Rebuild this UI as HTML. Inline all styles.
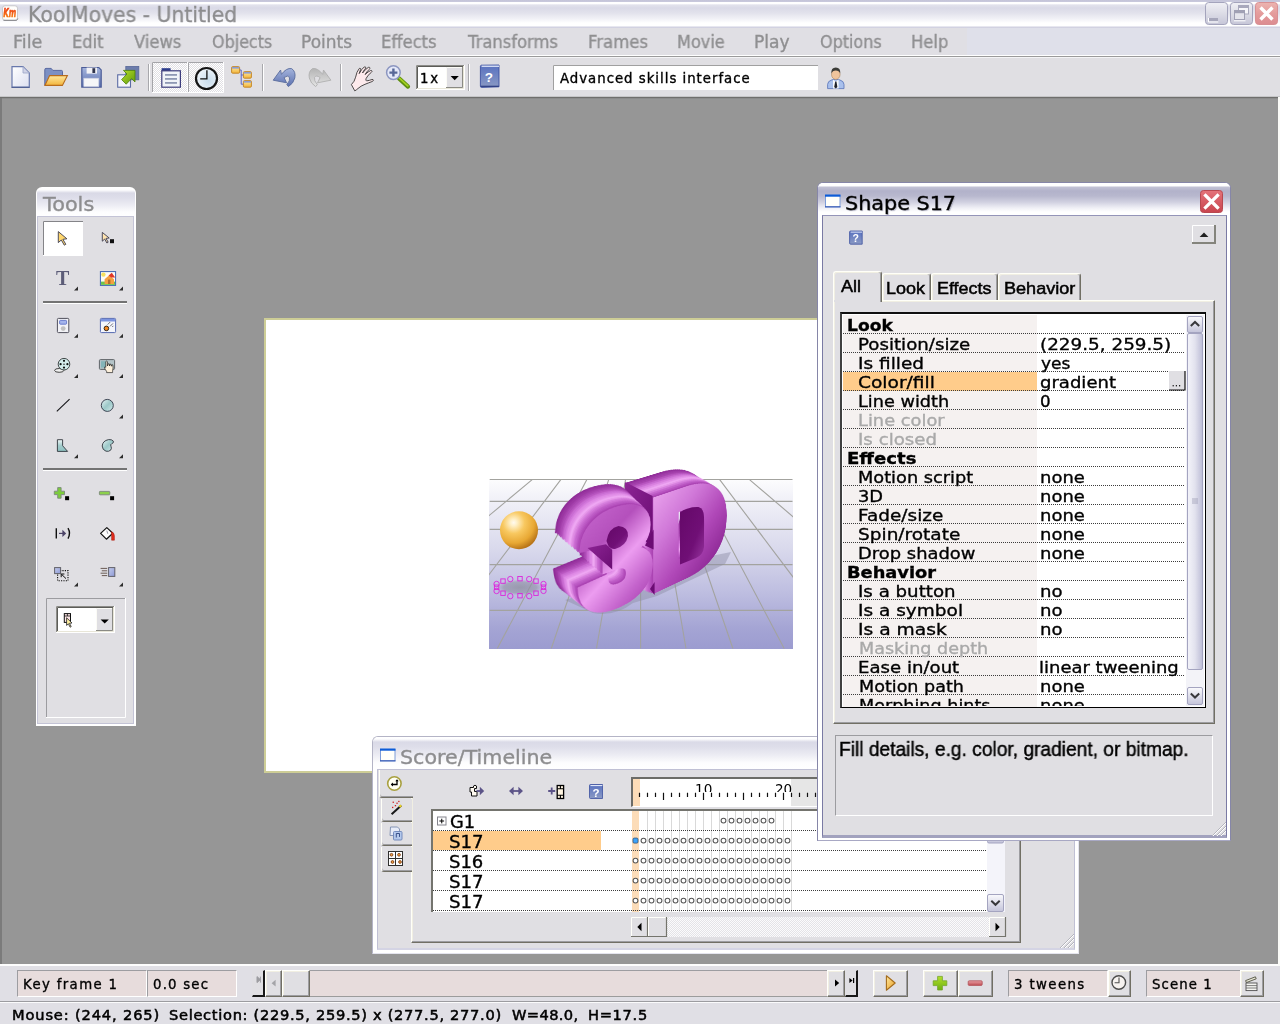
<!DOCTYPE html>
<html lang="en">
<head>
<meta charset="utf-8">
<title>KoolMoves - Untitled</title>
<style>
*{box-sizing:border-box;margin:0;padding:0}
html,body{width:1280px;height:1024px;overflow:hidden}
body{background:#969696;font-family:"DejaVu Sans","Liberation Sans",sans-serif;color:#000;position:relative}
.a{position:absolute}
.t{position:absolute;white-space:pre;transform-origin:0 0;will-change:transform;-webkit-text-stroke:.35px}
svg{position:absolute;overflow:visible}
/* main window chrome */
#titlebar{left:0;top:0;width:1280px;height:28px;background:linear-gradient(#c4c4d8 0,#c8c8dc 1.5px,#ffffff 2px,#ffffff 3.5px,#e2e2ec 5px,#dadae7 8px,#e2e2ec 13px,#f2f2f7 19px,#ffffff 23px,#ffffff 26px,#cfcfe0 27px,#d4d4e2 28px)}
#menubar{left:0;top:28px;width:1280px;height:27px;background:#dfe0ea}
#menubar .mb{left:0;top:0;width:967px;height:27px;background:#e0dfe4}
#menusep{left:0;top:55px;width:1280px;height:3px;background:linear-gradient(#ffffff 0,#ffffff 1px,#9a9a9a 1px,#9a9a9a 2px,#f4f4f6 2px)}
#toolbar{left:0;top:58px;width:1280px;height:39px;background:#e0dfe3}
#tbshadow{left:0;top:96px;width:1280px;height:3px;background:linear-gradient(#c6c6c8 0,#c6c6c8 1px,#6f6f6d 1px,#6f6f6d 2px,#8c8c8c 2px,#8c8c8c 3px)}
.menu{color:#8f8f91}
.panel{background:#e0dfe3}
</style>
</head>
<body>
<!-- main window chrome -->
<div class="a" id="titlebar"></div>
<div class="t" style="left:28.49px;top:2.8px;font-size:20.5px;line-height:24px;transform:scaleX(0.9944);color:#8d8d8f">KoolMoves - Untitled</div>
<div class="a" id="menubar"><div class="a mb"></div></div>
<div class="t menu" style="left:12.75px;top:31.8px;font-size:17px;line-height:20px;transform:scaleX(1.0344)">File</div>
<div class="t menu" style="left:71.87px;top:31.8px;font-size:17px;line-height:20px;transform:scaleX(0.9569)">Edit</div>
<div class="t menu" style="left:133.5px;top:31.8px;font-size:17px;line-height:20px;transform:scaleX(0.9624)">Views</div>
<div class="t menu" style="left:211.55px;top:31.8px;font-size:17px;line-height:20px;transform:scaleX(0.9386)">Objects</div>
<div class="t menu" style="left:301.12px;top:31.8px;font-size:17px;line-height:20px;transform:scaleX(0.9939)">Points</div>
<div class="t menu" style="left:381.37px;top:31.8px;font-size:17px;line-height:20px;transform:scaleX(0.9601)">Effects</div>
<div class="t menu" style="left:467.66px;top:31.8px;font-size:17px;line-height:20px;transform:scaleX(0.9628)">Transforms</div>
<div class="t menu" style="left:587.6px;top:31.8px;font-size:17px;line-height:20px;transform:scaleX(0.9705)">Frames</div>
<div class="t menu" style="left:677.14px;top:31.8px;font-size:17px;line-height:20px;transform:scaleX(0.9483)">Movie</div>
<div class="t menu" style="left:754.29px;top:31.8px;font-size:17px;line-height:20px;transform:scaleX(1.0072)">Play</div>
<div class="t menu" style="left:820.15px;top:31.8px;font-size:17px;line-height:20px;transform:scaleX(0.9404)">Options</div>
<div class="t menu" style="left:911.37px;top:31.8px;font-size:17px;line-height:20px;transform:scaleX(0.9626)">Help</div>
<div class="a" id="menusep"></div>
<div class="a" id="toolbar"></div>
<div class="a" id="tbshadow"></div>
<div class="a" style="left:0;top:98px;width:2px;height:868px;background:#7b7b7b"></div>
<svg class="a" style="left:0;top:0" width="1280" height="28" viewBox="0 0 1280 28">
<defs>
<linearGradient id="gWb" x1="0" y1="0" x2="0" y2="1"><stop offset="0" stop-color="#f0f0f5"/><stop offset=".5" stop-color="#dcdce6"/><stop offset="1" stop-color="#c6c6d8"/></linearGradient>
<linearGradient id="gWc" x1="0" y1="0" x2="0" y2="1"><stop offset="0" stop-color="#ecb4b0"/><stop offset=".5" stop-color="#e49c9c"/><stop offset="1" stop-color="#dc8c90"/></linearGradient>
<linearGradient id="gKm" x1="0" y1="0" x2="0" y2="1"><stop offset="0" stop-color="#e83018"/><stop offset="1" stop-color="#fc8c10"/></linearGradient>
</defs>
<rect x="2.5" y="5.8" width="15" height="14.600" rx="2.500" fill="#fffefc" stroke="#b8b8bc" stroke-width=".7"/>
<path d="M3.500 20.300h13q1-.5 1.300-1.800" fill="none" stroke="#6c6c70" stroke-width=".8"/>
<text x="3.200" y="17" font-family="DejaVu Sans,sans-serif" font-weight="bold" font-style="italic" font-size="11.500" fill="url(#gKm)" stroke="url(#gKm)" stroke-width=".5" textLength="13" lengthAdjust="spacingAndGlyphs">Km</text>
<rect x="1205.500" y="2.500" width="22" height="22" rx="3.200" fill="url(#gWb)" stroke="#a4a4bc" stroke-width="1"/>
<rect x="1230.500" y="2.500" width="22" height="22" rx="3.200" fill="url(#gWb)" stroke="#a4a4bc" stroke-width="1"/>
<rect x="1255.500" y="2.500" width="22" height="22" rx="3.200" fill="url(#gWc)" stroke="#d89094" stroke-width="1"/>
<path d="M1208.500 18v4h9.800" fill="none" stroke="#ffffff" stroke-width="1"/>
<rect x="1209" y="18" width="9" height="3" fill="#a6a6ba"/>
<rect x="1238.500" y="5.500" width="10" height="8.500" fill="#f6f6fa" stroke="#a8a8bc" stroke-width="1"/>
<rect x="1238" y="5" width="11" height="3" fill="#a8a8bc"/>
<rect x="1234.500" y="10.500" width="10" height="9" fill="#e4e4ec" stroke="#a0a0b4" stroke-width="1"/>
<rect x="1234" y="10" width="11" height="3.200" fill="#a0a0b4"/>
<path d="M1234 20.800h11.500" stroke="#ffffff" stroke-width="1"/>
<path d="M1260.500 7.500l12 12M1272.500 7.500l-12 12" stroke="#ffffff" stroke-width="3.400"/>
</svg>
<!-- toolbar -->
<svg class="a" style="left:0;top:58px" width="1280" height="40" viewBox="0 58 1280 40">
<defs>
<linearGradient id="gPage" x1="0" y1="0" x2="1" y2="1"><stop offset="0" stop-color="#ffffff"/><stop offset="1" stop-color="#dcdff0"/></linearGradient>
<linearGradient id="gFold" x1="0" y1="0" x2="0" y2="1"><stop offset="0" stop-color="#ffe9a0"/><stop offset="1" stop-color="#f2b43a"/></linearGradient>
<linearGradient id="gBlue" x1="0" y1="0" x2="0" y2="1"><stop offset="0" stop-color="#a4b4dc"/><stop offset="1" stop-color="#5c70b0"/></linearGradient>
<linearGradient id="gGreen" x1="0" y1="0" x2="1" y2="1"><stop offset="0" stop-color="#b6dc2a"/><stop offset="1" stop-color="#5e9a0c"/></linearGradient>
<linearGradient id="gGray" x1="0" y1="0" x2="0" y2="1"><stop offset="0" stop-color="#b4b4b4"/><stop offset="1" stop-color="#e4e4e4"/></linearGradient>
<linearGradient id="gBook" x1="0" y1="0" x2="0" y2="1"><stop offset="0" stop-color="#5871c0"/><stop offset="1" stop-color="#8b9ac4"/></linearGradient>
<radialGradient id="gClock" cx=".6" cy=".6" r=".7"><stop offset="0" stop-color="#c8dcec"/><stop offset="1" stop-color="#f4f8fc"/></radialGradient>
<pattern id="dith" width="2" height="2" patternUnits="userSpaceOnUse"><rect width="2" height="2" fill="#e0dfe3"/><rect width="1" height="1" fill="#fff"/><rect x="1" y="1" width="1" height="1" fill="#fff"/></pattern>
</defs>
<!-- new -->
<path d="M12 66.700h11l6.300 6.300v14.200H12z" fill="url(#gPage)" stroke="#6878ac" stroke-width="1.200"/><path d="M11.600 87.400h18" stroke="#4c5c90" stroke-width="1"/>
<path d="M23 66.7v6.3h6.3z" fill="#d0d3e6" stroke="#9aa4c8" stroke-width=".8"/>
<!-- open -->
<path d="M44.8 85.2V69.6q0-1.2 1.2-1.2h5.2l1.6 2h8.6q1.1 0 1.1 1.1v4" fill="#7c90c4" stroke="#5868a0" stroke-width="1"/>
<path d="M49.6 75.6h17.8l-5 9.8H44.9z" fill="url(#gFold)" stroke="#b86c1c" stroke-width="1.100"/>
<!-- save -->
<path d="M81.8 67.5h17l2.4 2.4v17.2H81.8z" fill="url(#gBlue)" stroke="#4c5c98" stroke-width="1.200"/>
<rect x="86.6" y="67.6" width="10.4" height="6" fill="#f2f2f6"/>
<rect x="92.4" y="68.2" width="2.8" height="4.8" fill="#30344c"/>
<rect x="83.8" y="78.2" width="15" height="8.4" fill="#f6f6f8" stroke="#c8cce0" stroke-width=".6"/>
<!-- export -->
<rect x="125.8" y="66.4" width="13" height="13.4" fill="#6c7cac" stroke="#586898" stroke-width=".8"/>
<rect x="117.7" y="74.8" width="12.8" height="12.4" fill="#f4f5fa" stroke="#5c6ca4" stroke-width="1.1"/>
<path d="M123.4 70.4h11.6v11.6l-3.4-3.4-5.4 5.6-4.6-4.6 5.4-5.6z" fill="url(#gGreen)" stroke="#4c8208" stroke-width=".8"/>
<!-- separators -->
<g fill="#a8a8ac"><rect x="148" y="64" width="1" height="27"/><rect x="262" y="64" width="1" height="27"/><rect x="340" y="64" width="1" height="27"/><rect x="468" y="64" width="1" height="27"/></g>
<g fill="#ffffff"><rect x="149" y="64" width="1" height="27"/><rect x="263" y="64" width="1" height="27"/><rect x="341" y="64" width="1" height="27"/><rect x="469" y="64" width="1" height="27"/></g>
<!-- pressed buttons -->
<rect x="152" y="62" width="35" height="30" fill="url(#dith)"/>
<path d="M152.5 92V62.5H187" fill="none" stroke="#a4a4a8" stroke-width="1"/>
<path d="M152 92.5h35.5V62" fill="none" stroke="#ffffff" stroke-width="1"/>
<rect x="188" y="62" width="35" height="30" fill="url(#dith)"/>
<path d="M188.500 92V62.500H223" fill="none" stroke="#a4a4a8" stroke-width="1"/>
<path d="M188 92.500h35.500V62" fill="none" stroke="#ffffff" stroke-width="1"/>
<!-- properties icon -->
<rect x="161.600" y="68.200" width="9" height="3" fill="#2c3c8c"/>
<rect x="161.800" y="70.800" width="18.600" height="16.400" fill="#f0f3f8" stroke="#3c3c7c" stroke-width="1.2"/>
<g fill="#8e98b4"><rect x="165" y="74" width="12" height="1.800"/><rect x="165" y="78" width="12" height="1.800"/><rect x="165" y="82" width="12" height="1.800"/></g>
<!-- clock -->
<circle cx="206.500" cy="78.500" r="10.500" fill="url(#gClock)" stroke="#141414" stroke-width="2.200"/>
<path d="M206.900 70.200v8.600h-6.700" fill="none" stroke="#101010" stroke-width="1.300"/>
<!-- tree -->
<path d="M240 70h1.200v14.200h2.400M241.200 75h2.400" fill="none" stroke="#5a64c4" stroke-width="1"/>
<g fill="url(#gFold)" stroke="#c08020" stroke-width=".9"><rect x="231.600" y="66.600" width="8" height="6.600" rx="1"/><rect x="243.400" y="71.600" width="8" height="6.600" rx="1"/><rect x="243.400" y="80.600" width="8" height="6.600" rx="1"/></g>
<g fill="#8c9cd0"><rect x="232" y="67" width="7.200" height="1.600"/><rect x="243.800" y="72" width="7.200" height="1.600"/><rect x="243.800" y="81" width="7.200" height="1.600"/></g>
<!-- undo -->
<path d="M273.2 80.2L280.6 70L281.4 74.4Q286.5 67.6 291.6 68.6Q296 71.4 294.8 78Q293.4 83.6 288.4 86.6L286.8 84.6Q290.4 80.6 289.6 77.4Q287.8 74.6 284 77.6L286.6 82.8Z" fill="url(#gBlue)" stroke="#5a6c9c" stroke-width=".9" stroke-linejoin="round"/>
<!-- redo -->
<path d="M330.9 80.2 L323.5 70.0 L322.7 74.4 Q317.6 67.6 312.5 68.6 Q308.1 71.4 309.3 78.0 Q310.7 83.6 315.7 86.6 L317.3 84.6 Q313.7 80.6 314.5 77.4 Q316.3 74.6 320.1 77.6 L317.5 82.8Z" fill="url(#gGray)" stroke="#b0b0b0" stroke-width=".9" stroke-linejoin="round"/>
<!-- hand -->
<path d="M351.400 84.600q3.200-3 4.200-7.400q1-5.600 3.600-8.600q.8-.8 1.400 0q.4.800-.6 2.400l-.8 2.600q2.400-4.600 5-6.600q1-.6 1.500.2q.4.800-.8 2q-1.600 1.800-2.400 3.800q3-3.800 5.800-5.600q1-.5 1.500.3q.4.800-.7 1.800q-2.600 2.400-4 5q3.200-3 5.600-4q1-.3 1.300.5q.2.800-.8 1.500q-3.600 2.600-5.200 6.200q-.6 1.800.6 2.200q2.800-.4 5.400-1.400q1.300-.3 1.400.7q0 .8-1.200 1.300q-4.200 1.600-7.200 2.800q-4.200 1.600-7 4.200q-1.600 1.400-3.200 2.400z" fill="#fdeaec" stroke="#3c3838" stroke-width=".9" stroke-linejoin="round"/>
<!-- zoom -->
<path d="M399 78.400l9 8.200" stroke="#5e8e10" stroke-width="4.200" stroke-linecap="round"/>
<path d="M399.400 78.200l8.400 7.600" stroke="#a4d020" stroke-width="1.800" stroke-linecap="round"/>
<circle cx="393.400" cy="72.600" r="6.800" fill="#e4e8f8" stroke="#8c96c0" stroke-width="1.500"/>
<path d="M389.400 72.600h8M393.400 68.600v8" stroke="#586898" stroke-width="2.400"/>
<!-- combo -->
<rect x="416" y="65" width="49" height="25" fill="#ffffff"/>
<path d="M416.500 90V65.500H465" fill="none" stroke="#8c8c88" stroke-width="1"/>
<path d="M417.500 89V66.500H464" fill="none" stroke="#5c5c58" stroke-width="1"/>
<path d="M416 89.500h48.500V65" fill="none" stroke="#ffffff" stroke-width="1"/>
<path d="M417 88.500h46.500V66" fill="none" stroke="#e8e6d8" stroke-width="1"/>
<rect x="446" y="67" width="17" height="21" fill="#e0dfe3"/>
<path d="M446.500 88V67.500H463" fill="none" stroke="#fbfbf6" stroke-width="1"/>
<path d="M446 87.500h16.500V67" fill="none" stroke="#8a8a84" stroke-width="1"/>
<path d="M450.600 76h8.200l-4.100 4.200z" fill="#000"/>
<!-- help book -->
<path d="M480.400 66.400q0-1 1-1.200l17.600-.2v21.800l-17.400.6q-1.200 0-1.200-1.200z" fill="url(#gBook)" stroke="#3c50a0" stroke-width=".9"/>
<path d="M481.600 65.600h17.400v1.300h-17.400z" fill="#dfe6f8"/>
<path d="M480.800 86.300h18" stroke="#2c3c80" stroke-width="1.200"/>
<!-- field -->
<rect x="553" y="65" width="265" height="25" fill="#ffffff"/>
<path d="M553.500 90V65.500H818" fill="none" stroke="#a0a0a0" stroke-width="1"/>
<!-- user -->
<path d="M827.600 88.600v-4.200q0-3.200 4.400-4.600l3.800-.6l3.800.6q4.400 1.400 4.400 4.600v4.200z" fill="#a9c0ec" stroke="#5872b8" stroke-width=".8"/>
<path d="M833 79.600l2.800 2.200 2.800-2.200v9h-5.600z" fill="#f6f8fc"/>
<path d="M835.200 81.400h1.200l1 5.600-1.600 1.600-1.600-1.600z" fill="#20242c"/>
<ellipse cx="835.800" cy="74.400" rx="4.300" ry="5" fill="#f0c49c" stroke="#a07850" stroke-width=".5"/>
<path d="M831.400 73.600q-.6-6 4.400-6q5 0 4.400 6q-1-3-4.400-3t-4.400 3z" fill="#3c3c38"/>
<text x="484.800" y="82" font-family="Liberation Sans,sans-serif" font-weight="bold" font-size="13.500" fill="#ffffff">?</text>
</svg>
<div class="t" style="left:420.45px;top:70.7px;font-size:13.3px;line-height:15px;letter-spacing:1.712px">1x</div>
<div class="t" style="left:560.4px;top:70.6px;font-size:13.3px;line-height:15px;letter-spacing:0.983px">Advanced skills interface</div>
<!-- stage -->
<div class="a" style="left:264px;top:318px;width:600px;height:455px;background:#fff;border:2px solid #cdcd96"></div>
<!-- stage picture -->
<style>
#pic{left:489px;top:479px;width:304px;height:170px;z-index:0;background:linear-gradient(#fdfdfe 0,#f1f1f8 20px,#d9d9ec 70px,#bdbde0 115px,#a4a4d4 150px,#9c9cd0 170px)}
#pic .lt{position:absolute;left:0;top:0;transform-origin:0 0;overflow:visible}
#pic .lt text{font:bold 100px 'Liberation Sans',sans-serif;stroke-width:8.0px;stroke-linejoin:miter;stroke-miterlimit:3}
#pic .l3{transform:matrix3d(1.7834,-0.3712,0,0.00204933,7.72168e-18,1.52141,0,-0,0,0,1,0,-4.27607,-52.488,0,1)}
#pic .lD{transform:matrix3d(1.61358,-0.410601,0,0.00180928,5.99207e-16,1.39518,0,2.65579e-18,0,0,1,0,81.5804,-62.407,0,1)}
</style>
<div class="a" id="pic">
<svg class="a" style="left:0;top:0;overflow:hidden" width="304" height="170" viewBox="0 0 304 170">
<defs>
<radialGradient id="gBall" cx=".36" cy=".3" r=".72"><stop offset="0" stop-color="#fffaf0"/><stop offset=".12" stop-color="#fff0c8"/><stop offset=".4" stop-color="#f8c860"/><stop offset=".75" stop-color="#e8a834"/><stop offset="1" stop-color="#b87418"/></radialGradient>
<linearGradient id="gDk" x1="0" y1="0" x2="1" y2="1"><stop offset="0" stop-color="#8c2494"/><stop offset="1" stop-color="#6a0c72"/></linearGradient>
<linearGradient id="gDk2" x1="0" y1="0" x2="1" y2="1"><stop offset="0" stop-color="#640868"/><stop offset=".6" stop-color="#700f76"/><stop offset="1" stop-color="#9a38a2"/></linearGradient>
<radialGradient id="gShd" cx=".5" cy=".5" r=".5"><stop offset="0" stop-color="#8c8c9c" stop-opacity=".75"/><stop offset=".7" stop-color="#9090a4" stop-opacity=".6"/><stop offset="1" stop-color="#9c9cb4" stop-opacity="0"/></radialGradient>
</defs>
<path d="M43.5 0.4L-159.4 169.5M72.0 0.4L-55.8 169.5M97.9 0.4L8.3 169.5M119.8 0.4L62.3 169.5M136.6 0.4L107.5 169.5M151.6 0.4L151.6 169.5M167.9 0.4L197.0 169.5M186.1 0.4L243.9 169.5M206.1 0.4L295.2 169.5M230.5 0.4L357.8 169.5M260.2 0.4L458.9 169.5M0.7 0.4H303.5M0.7 22.4H303.5M0.7 50.4H303.5M0.7 85.6H303.5M0.7 131.4H303.5" fill="none" stroke="#a3a39f" stroke-width="1.1"/>
<ellipse cx="31" cy="108.4" rx="23.5" ry="8" fill="url(#gShd)"/>
<g fill="none" stroke="#dc24dc" stroke-width=".9"><rect x="11.8" y="99.9" width="4.4" height="4.4"/><rect x="28.8" y="97.5" width="4.4" height="4.4"/><rect x="44.8" y="99.9" width="4.4" height="4.4"/><rect x="52.3" y="106.0" width="4.4" height="4.4"/><rect x="44.8" y="112.0" width="4.4" height="4.4"/><rect x="28.8" y="114.5" width="4.4" height="4.4"/><rect x="11.8" y="112.0" width="4.4" height="4.4"/><rect x="5.4" y="106.0" width="4.4" height="4.4"/><circle cx="21.3" cy="100.1" r="2.7"/><circle cx="40.2" cy="100.1" r="2.7"/><circle cx="54.5" cy="105.0" r="2.7"/><circle cx="54.5" cy="111.9" r="2.7"/><circle cx="40.2" cy="117.1" r="2.7"/><circle cx="21.3" cy="117.1" r="2.7"/><circle cx="7.6" cy="105.0" r="2.7"/><circle cx="7.6" cy="112.0" r="2.7"/></g>
<circle cx="30" cy="51.2" r="19" fill="url(#gBall)"/>
<path d="M76 121l28 13q22 4 40-10l24-7 68-32 6-12-30 6-60 20z" fill="#8c8ca4" fill-opacity=".45"/>
</svg>
<svg class="lt l3" style="z-index:3" width="127" height="166" viewBox="0 0 127 166">
<defs><linearGradient id="gf3" gradientUnits="userSpaceOnUse" x1="58" y1="77" x2="117" y2="157"><stop offset="0" stop-color="#c464cc"/><stop offset=".3" stop-color="#b450bc"/><stop offset=".55" stop-color="#ec9cf0"/><stop offset=".8" stop-color="#c464cc"/><stop offset="1" stop-color="#a840b0"/></linearGradient></defs>
<filter id="x3" filterUnits="userSpaceOnUse" x="0" y="0" width="220" height="200" color-interpolation-filters="sRGB"><feOffset in="SourceAlpha" dx="-16.27" dy="-20.11"/><feComponentTransfer result="s24"><feFuncR type="linear" slope="0" intercept="0.561"/><feFuncG type="linear" slope="0" intercept="0.169"/><feFuncB type="linear" slope="0" intercept="0.592"/></feComponentTransfer><feOffset in="SourceAlpha" dx="-15.59" dy="-19.27"/><feComponentTransfer result="s23"><feFuncR type="linear" slope="0" intercept="0.584"/><feFuncG type="linear" slope="0" intercept="0.192"/><feFuncB type="linear" slope="0" intercept="0.616"/></feComponentTransfer><feOffset in="SourceAlpha" dx="-14.92" dy="-18.43"/><feComponentTransfer result="s22"><feFuncR type="linear" slope="0" intercept="0.608"/><feFuncG type="linear" slope="0" intercept="0.216"/><feFuncB type="linear" slope="0" intercept="0.639"/></feComponentTransfer><feOffset in="SourceAlpha" dx="-14.24" dy="-17.60"/><feComponentTransfer result="s21"><feFuncR type="linear" slope="0" intercept="0.627"/><feFuncG type="linear" slope="0" intercept="0.235"/><feFuncB type="linear" slope="0" intercept="0.659"/></feComponentTransfer><feOffset in="SourceAlpha" dx="-13.56" dy="-16.76"/><feComponentTransfer result="s20"><feFuncR type="linear" slope="0" intercept="0.651"/><feFuncG type="linear" slope="0" intercept="0.259"/><feFuncB type="linear" slope="0" intercept="0.682"/></feComponentTransfer><feOffset in="SourceAlpha" dx="-12.88" dy="-15.92"/><feComponentTransfer result="s19"><feFuncR type="linear" slope="0" intercept="0.682"/><feFuncG type="linear" slope="0" intercept="0.298"/><feFuncB type="linear" slope="0" intercept="0.714"/></feComponentTransfer><feOffset in="SourceAlpha" dx="-12.20" dy="-15.08"/><feComponentTransfer result="s18"><feFuncR type="linear" slope="0" intercept="0.722"/><feFuncG type="linear" slope="0" intercept="0.337"/><feFuncB type="linear" slope="0" intercept="0.753"/></feComponentTransfer><feOffset in="SourceAlpha" dx="-11.53" dy="-14.24"/><feComponentTransfer result="s17"><feFuncR type="linear" slope="0" intercept="0.757"/><feFuncG type="linear" slope="0" intercept="0.380"/><feFuncB type="linear" slope="0" intercept="0.788"/></feComponentTransfer><feOffset in="SourceAlpha" dx="-10.85" dy="-13.41"/><feComponentTransfer result="s16"><feFuncR type="linear" slope="0" intercept="0.792"/><feFuncG type="linear" slope="0" intercept="0.424"/><feFuncB type="linear" slope="0" intercept="0.824"/></feComponentTransfer><feOffset in="SourceAlpha" dx="-10.17" dy="-12.57"/><feComponentTransfer result="s15"><feFuncR type="linear" slope="0" intercept="0.827"/><feFuncG type="linear" slope="0" intercept="0.467"/><feFuncB type="linear" slope="0" intercept="0.859"/></feComponentTransfer><feOffset in="SourceAlpha" dx="-9.49" dy="-11.73"/><feComponentTransfer result="s14"><feFuncR type="linear" slope="0" intercept="0.851"/><feFuncG type="linear" slope="0" intercept="0.506"/><feFuncB type="linear" slope="0" intercept="0.878"/></feComponentTransfer><feOffset in="SourceAlpha" dx="-8.81" dy="-10.89"/><feComponentTransfer result="s13"><feFuncR type="linear" slope="0" intercept="0.875"/><feFuncG type="linear" slope="0" intercept="0.545"/><feFuncB type="linear" slope="0" intercept="0.902"/></feComponentTransfer><feOffset in="SourceAlpha" dx="-8.14" dy="-10.06"/><feComponentTransfer result="s12"><feFuncR type="linear" slope="0" intercept="0.898"/><feFuncG type="linear" slope="0" intercept="0.584"/><feFuncB type="linear" slope="0" intercept="0.918"/></feComponentTransfer><feOffset in="SourceAlpha" dx="-7.46" dy="-9.22"/><feComponentTransfer result="s11"><feFuncR type="linear" slope="0" intercept="0.922"/><feFuncG type="linear" slope="0" intercept="0.624"/><feFuncB type="linear" slope="0" intercept="0.941"/></feComponentTransfer><feOffset in="SourceAlpha" dx="-6.78" dy="-8.38"/><feComponentTransfer result="s10"><feFuncR type="linear" slope="0" intercept="0.937"/><feFuncG type="linear" slope="0" intercept="0.655"/><feFuncB type="linear" slope="0" intercept="0.953"/></feComponentTransfer><feOffset in="SourceAlpha" dx="-6.10" dy="-7.54"/><feComponentTransfer result="s9"><feFuncR type="linear" slope="0" intercept="0.906"/><feFuncG type="linear" slope="0" intercept="0.600"/><feFuncB type="linear" slope="0" intercept="0.925"/></feComponentTransfer><feOffset in="SourceAlpha" dx="-5.42" dy="-6.70"/><feComponentTransfer result="s8"><feFuncR type="linear" slope="0" intercept="0.871"/><feFuncG type="linear" slope="0" intercept="0.549"/><feFuncB type="linear" slope="0" intercept="0.894"/></feComponentTransfer><feOffset in="SourceAlpha" dx="-4.75" dy="-5.87"/><feComponentTransfer result="s7"><feFuncR type="linear" slope="0" intercept="0.839"/><feFuncG type="linear" slope="0" intercept="0.498"/><feFuncB type="linear" slope="0" intercept="0.867"/></feComponentTransfer><feOffset in="SourceAlpha" dx="-4.07" dy="-5.03"/><feComponentTransfer result="s6"><feFuncR type="linear" slope="0" intercept="0.808"/><feFuncG type="linear" slope="0" intercept="0.443"/><feFuncB type="linear" slope="0" intercept="0.835"/></feComponentTransfer><feOffset in="SourceAlpha" dx="-3.39" dy="-4.19"/><feComponentTransfer result="s5"><feFuncR type="linear" slope="0" intercept="0.776"/><feFuncG type="linear" slope="0" intercept="0.400"/><feFuncB type="linear" slope="0" intercept="0.808"/></feComponentTransfer><feOffset in="SourceAlpha" dx="-2.71" dy="-3.35"/><feComponentTransfer result="s4"><feFuncR type="linear" slope="0" intercept="0.749"/><feFuncG type="linear" slope="0" intercept="0.365"/><feFuncB type="linear" slope="0" intercept="0.780"/></feComponentTransfer><feOffset in="SourceAlpha" dx="-2.03" dy="-2.51"/><feComponentTransfer result="s3"><feFuncR type="linear" slope="0" intercept="0.725"/><feFuncG type="linear" slope="0" intercept="0.333"/><feFuncB type="linear" slope="0" intercept="0.757"/></feComponentTransfer><feOffset in="SourceAlpha" dx="-1.36" dy="-1.68"/><feComponentTransfer result="s2"><feFuncR type="linear" slope="0" intercept="0.698"/><feFuncG type="linear" slope="0" intercept="0.298"/><feFuncB type="linear" slope="0" intercept="0.729"/></feComponentTransfer><feOffset in="SourceAlpha" dx="-0.68" dy="-0.84"/><feComponentTransfer result="s1"><feFuncR type="linear" slope="0" intercept="0.671"/><feFuncG type="linear" slope="0" intercept="0.267"/><feFuncB type="linear" slope="0" intercept="0.702"/></feComponentTransfer><feMerge><feMergeNode in="s24"/><feMergeNode in="s23"/><feMergeNode in="s22"/><feMergeNode in="s21"/><feMergeNode in="s20"/><feMergeNode in="s19"/><feMergeNode in="s18"/><feMergeNode in="s17"/><feMergeNode in="s16"/><feMergeNode in="s15"/><feMergeNode in="s14"/><feMergeNode in="s13"/><feMergeNode in="s12"/><feMergeNode in="s11"/><feMergeNode in="s10"/><feMergeNode in="s9"/><feMergeNode in="s8"/><feMergeNode in="s7"/><feMergeNode in="s6"/><feMergeNode in="s5"/><feMergeNode in="s4"/><feMergeNode in="s3"/><feMergeNode in="s2"/><feMergeNode in="s1"/><feMergeNode in="SourceGraphic"/></feMerge></filter>
<text x="60" y="151" fill="url(#gf3)" stroke="url(#gf3)" filter="url(#x3)">3</text>
</svg>
<svg class="lt lD" style="z-index:1" width="142" height="166" viewBox="0 0 142 166">
<defs><linearGradient id="gfD" gradientUnits="userSpaceOnUse" x1="62" y1="77" x2="133" y2="155"><stop offset="0" stop-color="#e8a0ec"/><stop offset=".3" stop-color="#d078d8"/><stop offset=".6" stop-color="#b048b8"/><stop offset="1" stop-color="#801c88"/></linearGradient></defs>
<filter id="xD" filterUnits="userSpaceOnUse" x="0" y="0" width="220" height="200" color-interpolation-filters="sRGB"><feOffset in="SourceAlpha" dx="-23.05" dy="-18.62"/><feComponentTransfer result="s24"><feFuncR type="linear" slope="0" intercept="0.561"/><feFuncG type="linear" slope="0" intercept="0.169"/><feFuncB type="linear" slope="0" intercept="0.592"/></feComponentTransfer><feOffset in="SourceAlpha" dx="-22.09" dy="-17.84"/><feComponentTransfer result="s23"><feFuncR type="linear" slope="0" intercept="0.584"/><feFuncG type="linear" slope="0" intercept="0.192"/><feFuncB type="linear" slope="0" intercept="0.616"/></feComponentTransfer><feOffset in="SourceAlpha" dx="-21.13" dy="-17.07"/><feComponentTransfer result="s22"><feFuncR type="linear" slope="0" intercept="0.608"/><feFuncG type="linear" slope="0" intercept="0.216"/><feFuncB type="linear" slope="0" intercept="0.639"/></feComponentTransfer><feOffset in="SourceAlpha" dx="-20.17" dy="-16.29"/><feComponentTransfer result="s21"><feFuncR type="linear" slope="0" intercept="0.627"/><feFuncG type="linear" slope="0" intercept="0.235"/><feFuncB type="linear" slope="0" intercept="0.659"/></feComponentTransfer><feOffset in="SourceAlpha" dx="-19.21" dy="-15.52"/><feComponentTransfer result="s20"><feFuncR type="linear" slope="0" intercept="0.651"/><feFuncG type="linear" slope="0" intercept="0.259"/><feFuncB type="linear" slope="0" intercept="0.682"/></feComponentTransfer><feOffset in="SourceAlpha" dx="-18.25" dy="-14.74"/><feComponentTransfer result="s19"><feFuncR type="linear" slope="0" intercept="0.682"/><feFuncG type="linear" slope="0" intercept="0.298"/><feFuncB type="linear" slope="0" intercept="0.714"/></feComponentTransfer><feOffset in="SourceAlpha" dx="-17.29" dy="-13.97"/><feComponentTransfer result="s18"><feFuncR type="linear" slope="0" intercept="0.722"/><feFuncG type="linear" slope="0" intercept="0.337"/><feFuncB type="linear" slope="0" intercept="0.753"/></feComponentTransfer><feOffset in="SourceAlpha" dx="-16.33" dy="-13.19"/><feComponentTransfer result="s17"><feFuncR type="linear" slope="0" intercept="0.757"/><feFuncG type="linear" slope="0" intercept="0.380"/><feFuncB type="linear" slope="0" intercept="0.788"/></feComponentTransfer><feOffset in="SourceAlpha" dx="-15.37" dy="-12.41"/><feComponentTransfer result="s16"><feFuncR type="linear" slope="0" intercept="0.792"/><feFuncG type="linear" slope="0" intercept="0.424"/><feFuncB type="linear" slope="0" intercept="0.824"/></feComponentTransfer><feOffset in="SourceAlpha" dx="-14.41" dy="-11.64"/><feComponentTransfer result="s15"><feFuncR type="linear" slope="0" intercept="0.827"/><feFuncG type="linear" slope="0" intercept="0.467"/><feFuncB type="linear" slope="0" intercept="0.859"/></feComponentTransfer><feOffset in="SourceAlpha" dx="-13.45" dy="-10.86"/><feComponentTransfer result="s14"><feFuncR type="linear" slope="0" intercept="0.851"/><feFuncG type="linear" slope="0" intercept="0.506"/><feFuncB type="linear" slope="0" intercept="0.878"/></feComponentTransfer><feOffset in="SourceAlpha" dx="-12.49" dy="-10.09"/><feComponentTransfer result="s13"><feFuncR type="linear" slope="0" intercept="0.875"/><feFuncG type="linear" slope="0" intercept="0.545"/><feFuncB type="linear" slope="0" intercept="0.902"/></feComponentTransfer><feOffset in="SourceAlpha" dx="-11.53" dy="-9.31"/><feComponentTransfer result="s12"><feFuncR type="linear" slope="0" intercept="0.898"/><feFuncG type="linear" slope="0" intercept="0.584"/><feFuncB type="linear" slope="0" intercept="0.918"/></feComponentTransfer><feOffset in="SourceAlpha" dx="-10.57" dy="-8.53"/><feComponentTransfer result="s11"><feFuncR type="linear" slope="0" intercept="0.922"/><feFuncG type="linear" slope="0" intercept="0.624"/><feFuncB type="linear" slope="0" intercept="0.941"/></feComponentTransfer><feOffset in="SourceAlpha" dx="-9.61" dy="-7.76"/><feComponentTransfer result="s10"><feFuncR type="linear" slope="0" intercept="0.937"/><feFuncG type="linear" slope="0" intercept="0.655"/><feFuncB type="linear" slope="0" intercept="0.953"/></feComponentTransfer><feOffset in="SourceAlpha" dx="-8.65" dy="-6.98"/><feComponentTransfer result="s9"><feFuncR type="linear" slope="0" intercept="0.906"/><feFuncG type="linear" slope="0" intercept="0.600"/><feFuncB type="linear" slope="0" intercept="0.925"/></feComponentTransfer><feOffset in="SourceAlpha" dx="-7.68" dy="-6.21"/><feComponentTransfer result="s8"><feFuncR type="linear" slope="0" intercept="0.871"/><feFuncG type="linear" slope="0" intercept="0.549"/><feFuncB type="linear" slope="0" intercept="0.894"/></feComponentTransfer><feOffset in="SourceAlpha" dx="-6.72" dy="-5.43"/><feComponentTransfer result="s7"><feFuncR type="linear" slope="0" intercept="0.839"/><feFuncG type="linear" slope="0" intercept="0.498"/><feFuncB type="linear" slope="0" intercept="0.867"/></feComponentTransfer><feOffset in="SourceAlpha" dx="-5.76" dy="-4.66"/><feComponentTransfer result="s6"><feFuncR type="linear" slope="0" intercept="0.808"/><feFuncG type="linear" slope="0" intercept="0.443"/><feFuncB type="linear" slope="0" intercept="0.835"/></feComponentTransfer><feOffset in="SourceAlpha" dx="-4.80" dy="-3.88"/><feComponentTransfer result="s5"><feFuncR type="linear" slope="0" intercept="0.776"/><feFuncG type="linear" slope="0" intercept="0.400"/><feFuncB type="linear" slope="0" intercept="0.808"/></feComponentTransfer><feOffset in="SourceAlpha" dx="-3.84" dy="-3.10"/><feComponentTransfer result="s4"><feFuncR type="linear" slope="0" intercept="0.749"/><feFuncG type="linear" slope="0" intercept="0.365"/><feFuncB type="linear" slope="0" intercept="0.780"/></feComponentTransfer><feOffset in="SourceAlpha" dx="-2.88" dy="-2.33"/><feComponentTransfer result="s3"><feFuncR type="linear" slope="0" intercept="0.725"/><feFuncG type="linear" slope="0" intercept="0.333"/><feFuncB type="linear" slope="0" intercept="0.757"/></feComponentTransfer><feOffset in="SourceAlpha" dx="-1.92" dy="-1.55"/><feComponentTransfer result="s2"><feFuncR type="linear" slope="0" intercept="0.698"/><feFuncG type="linear" slope="0" intercept="0.298"/><feFuncB type="linear" slope="0" intercept="0.729"/></feComponentTransfer><feOffset in="SourceAlpha" dx="-0.96" dy="-0.78"/><feComponentTransfer result="s1"><feFuncR type="linear" slope="0" intercept="0.671"/><feFuncG type="linear" slope="0" intercept="0.267"/><feFuncB type="linear" slope="0" intercept="0.702"/></feComponentTransfer><feMerge><feMergeNode in="s24"/><feMergeNode in="s23"/><feMergeNode in="s22"/><feMergeNode in="s21"/><feMergeNode in="s20"/><feMergeNode in="s19"/><feMergeNode in="s18"/><feMergeNode in="s17"/><feMergeNode in="s16"/><feMergeNode in="s15"/><feMergeNode in="s14"/><feMergeNode in="s13"/><feMergeNode in="s12"/><feMergeNode in="s11"/><feMergeNode in="s10"/><feMergeNode in="s9"/><feMergeNode in="s8"/><feMergeNode in="s7"/><feMergeNode in="s6"/><feMergeNode in="s5"/><feMergeNode in="s4"/><feMergeNode in="s3"/><feMergeNode in="s2"/><feMergeNode in="s1"/><feMergeNode in="SourceGraphic"/></feMerge></filter>
<text x="60" y="151" fill="url(#gfD)" stroke="url(#gfD)" filter="url(#xD)">D</text>
</svg>
<svg class="a" style="left:0;top:0;z-index:2" width="304" height="170" viewBox="489 479 304 170">
<path d="M625.2 481.9l27.4 14.2v50l-27.4-18z" fill="url(#gDk)"/>
</svg>
<svg class="a" style="left:0;top:0;z-index:4" width="304" height="170" viewBox="489 479 304 170">
<path d="M680 512.500q8-6 18.500-5.500q5.500 1.500 5.500 10v30q-1 8-8 11l-16 6.500z" fill="url(#gDk2)"/>
<path d="M606.500 541q2-13 12-15q10 1 9.500 10q-2 10-13 13q-6 1-8.500-8z" fill="url(#gDk2)"/>
<path d="M587.600 548l18.400-3.800 6.200 5.500v19.800z" fill="url(#gDk)"/>
<path d="M645 545.500l8.600-16v20zM650 589l4.600-7v13z" fill="#6c0c74"/>
</svg>
</div>
<!-- Tools palette -->
<div class="a" style="left:36px;top:187px;width:100px;height:539px;background:#fff;border-radius:6px 6px 0 0"></div>
<div class="a" style="left:37px;top:188px;width:98px;height:29px;border-radius:5px 5px 0 0;background:linear-gradient(#ffffff 0,#fdfdfe 2px,#d9d9e6 5px,#dedeea 10px,#ececf3 17px,#fdfdfe 24px,#ffffff 29px)"></div>
<div class="a" style="left:37px;top:216px;width:97px;height:508px;background:#e0dfe3;border:1px solid #c4c4d6"></div>
<div class="t" style="left:42.82px;top:192.3px;font-size:20px;line-height:24px;transform:scaleX(1.0400);color:#8d8d8f">Tools</div>
<svg class="a" style="left:36px;top:187px" width="100" height="539" viewBox="36 187 100 539">
<defs>
<linearGradient id="gTeal" x1="0" y1="0" x2="1" y2="1"><stop offset="0" stop-color="#e6f4f4"/><stop offset=".5" stop-color="#9cc8c8"/><stop offset="1" stop-color="#d4ecec"/></linearGradient>
<linearGradient id="gTeal2" x1="0" y1="0" x2="0" y2="1"><stop offset="0" stop-color="#f0f8f8"/><stop offset=".5" stop-color="#a4cccc"/><stop offset="1" stop-color="#8cc0c0"/></linearGradient>
<linearGradient id="gLav" x1="0" y1="0" x2="1" y2="1"><stop offset="0" stop-color="#c4ccec"/><stop offset="1" stop-color="#8c98d4"/></linearGradient>
</defs>
<!-- selected tool -->
<rect x="43" y="221" width="40" height="35" fill="#ffffff"/>
<path d="M43.500 255V221.500H83" fill="none" stroke="#848488" stroke-width="1"/>
<path d="M58.300 231.600v11l3-2.600 3 5.200 1.500-.9-2.900-5 4-.5z" fill="#ffd76e" stroke="#3c3c50" stroke-width=".9" stroke-linejoin="round"/>
<path d="M102.300 232.400v8.800l2.400-2.200 2.200 4 1.300-.8-2.200-3.800 3.200-.4z" fill="#ffe4b0" stroke="#3c3c50" stroke-width=".9" stroke-linejoin="round"/>
<rect x="110" y="239.200" width="4" height="4" fill="#101010"/>
<!-- image tool -->
<rect x="100.400" y="271.600" width="15.200" height="13.800" fill="#fcfcf8" stroke="#3c64b0" stroke-width="1"/>
<rect x="101" y="281.600" width="14" height="3.300" fill="#6cc44c"/>
<circle cx="103.400" cy="274.600" r="2.200" fill="#f4e060"/>
<path d="M104.600 279.200l4.600-4 4.800 4v4.800h-9.400z" fill="#f4a040"/>
<path d="M108.600 275.400l3.200-2.600 3.400 4.800h-4z" fill="#e03828"/>
<rect x="108" y="279.600" width="2.400" height="4.400" fill="#b06c30"/>
<path d="M74 290.6h4v-4z" fill="#2c2c2c"/><path d="M119 290.6h4v-4z" fill="#2c2c2c"/>
<!-- separators -->
<rect x="43" y="301" width="84" height="2" fill="#737373"/><rect x="43" y="303" width="84" height="1" fill="#ffffff"/>
<rect x="43" y="468" width="84" height="2" fill="#737373"/><rect x="43" y="470" width="84" height="1" fill="#ffffff"/>
<!-- form tool -->
<rect x="57.400" y="318.400" width="11.400" height="14.200" rx="1" fill="#f2f2f6" stroke="#50505c" stroke-width="1"/>
<rect x="59.600" y="320.400" width="7" height="3.800" rx=".8" fill="#a4b4ec" stroke="#5468c4" stroke-width=".8"/>
<circle cx="63.200" cy="328.600" r="2.400" fill="#c0c0c0"/>
<!-- window ball tool -->
<rect x="100.400" y="318.400" width="15.200" height="14.200" rx="1" fill="#f4f6fc" stroke="#5468b0" stroke-width="1"/>
<rect x="100.900" y="318.900" width="14.200" height="2.600" fill="#7c94e0"/>
<path d="M107.600 324.600l2.600-2.600M110 326.400l3-3M112.200 327l1.200-1.200" stroke="#50505c" stroke-width=".8"/>
<circle cx="106.400" cy="328.400" r="2.300" fill="#f48820" stroke="#201810" stroke-width=".9"/>
<path d="M74 337.8h4v-4z" fill="#2c2c2c"/><path d="M119 337.8h4v-4z" fill="#2c2c2c"/>
<!-- film reel -->
<ellipse cx="59.200" cy="370.400" rx="4.600" ry="1.900" fill="#f0f0f0" stroke="#303030" stroke-width=".9"/>
<circle cx="64" cy="364.200" r="5.800" fill="#d4ecec" stroke="#404848" stroke-width="1"/>
<g fill="#101010"><circle cx="64" cy="360.800" r="1.100"/><circle cx="64" cy="367.600" r="1.100"/><circle cx="60.600" cy="364.200" r="1.100"/><circle cx="67.400" cy="364.200" r="1.100"/><circle cx="64" cy="364.200" r=".7"/></g>
<!-- hand button -->
<rect x="99.400" y="359.600" width="15.200" height="9.800" rx="1" fill="#b4c4c8" stroke="#606468" stroke-width="1"/>
<rect x="101" y="361.200" width="5" height="6.400" fill="#84b4b8"/>
<path d="M105.800 361.600q.9-1 1.600 0v4.400l.8-2.200h1l.3 2.200.5-1.800h1l.4 2 .5-1.400h.9q.7 2.800-.2 6.400v1.400h-6v-1.200q-1.800-2-2.200-4.200q.7-.7 1.400.2z" fill="#fdf0dc" stroke="#202020" stroke-width=".7" stroke-linejoin="round"/>
<path d="M74 378h4v-4z" fill="#2c2c2c"/><path d="M119 378h4v-4z" fill="#2c2c2c"/>
<!-- line, circle -->
<path d="M56.800 411.400l12.800-12.200" stroke="#141418" stroke-width="1.100"/>
<circle cx="107.300" cy="405.400" r="6" fill="url(#gTeal)" stroke="#2c3444" stroke-width=".9"/>
<path d="M119 418.4h4v-4z" fill="#2c2c2c"/>
<!-- polygon, blob -->
<path d="M57.400 439.700h5.200v6l5 5.700h-10.200z" fill="url(#gTeal2)" stroke="#30343c" stroke-width=".9"/>
<path d="M108.600 439.600q3.200-.4 4.800 1.600q.4 2-1.800 2.600q-1.600.6-.6 2.600q1 1.800-.4 3.800q-2 1.600-4.600 1q-3.600-1.200-3.800-5.200q.4-5.200 6.400-6.400z" fill="url(#gTeal)" stroke="#30343c" stroke-width=".9"/>
<path d="M74 458.2h4v-4z" fill="#2c2c2c"/><path d="M119 458.2h4v-4z" fill="#2c2c2c"/>
<!-- add / remove point -->
<path d="M57.700 487.600h3.400v3.600h3.400v3.400h-3.400v3.600h-3.400v-3.600h-3.400v-3.400h3.400z" fill="#7ccc3c" stroke="#7c887c" stroke-width=".9"/>
<rect x="65.100" y="496.200" width="4" height="4" fill="#000"/>
<rect x="99.400" y="491.400" width="10.400" height="3.400" rx=".6" fill="#8cd04c" stroke="#7c887c" stroke-width=".9"/>
<rect x="110.100" y="496.200" width="4" height="4" fill="#000"/>
<!-- step tool -->
<path d="M56.300 528.200v10.400" stroke="#101010" stroke-width="1.400"/>
<path d="M68 528.200q3 5.200 0 10.400" fill="none" stroke="#101010" stroke-width="1.400"/>
<path d="M59 533.400h4" stroke="#4c4468" stroke-width="1.200"/>
<path d="M62.400 529.800l3.800 3.600-3.800 3.600z" fill="#4c4468"/>
<!-- bucket -->
<path d="M100.600 533.400l6.200-5.800 6 5.600-6.400 6z" fill="#fcfcfc" stroke="#101010" stroke-width="1.200" stroke-linejoin="round"/>
<path d="M106.800 530.600l1 3.200" stroke="#8c8c9c" stroke-width=".9"/>
<path d="M111.400 531.600q3 1.200 3 4.400v4.200h-2.800v-5.200z" fill="#e42c1c" stroke="#a01c10" stroke-width=".5"/>
<!-- select-in-box -->
<rect x="57.600" y="570.600" width="10.400" height="10.200" fill="none" stroke="#101010" stroke-width="1.100" stroke-dasharray="1.200 1.200"/>
<rect x="54.600" y="567.600" width="6" height="6" fill="url(#gLav)" stroke="#606068" stroke-width="1"/>
<path d="M66 578.600l-4.400-4.200M61.200 577.200v-3.200h3.200" fill="none" stroke="#101010" stroke-width="1"/>
<!-- motion -->
<rect x="108.600" y="567.600" width="6.200" height="8.800" fill="url(#gLav)" stroke="#606068" stroke-width="1"/>
<path d="M100.600 568.400h6.600M101.800 570.800h5.400M100.600 573.200h6.600M101.800 575.600h5.400" stroke="#5c4c44" stroke-width=".9"/>
<path d="M74 586.4h4v-4z" fill="#2c2c2c"/><path d="M119 586.4h4v-4z" fill="#2c2c2c"/>
<!-- sunken frame -->
<path d="M46.500 718V598.500H126" fill="none" stroke="#9c9ca0" stroke-width="1"/>
<path d="M46 717.500h79.500V598" fill="none" stroke="#ffffff" stroke-width="1"/>
<!-- combo -->
<rect x="56" y="606" width="59" height="27" fill="#ffffff"/>
<path d="M56.500 633V606.500H115" fill="none" stroke="#8c8c88" stroke-width="1"/>
<path d="M57.500 632V607.500H114" fill="none" stroke="#5c5c58" stroke-width="1"/>
<path d="M56 632.500h58.500V606" fill="none" stroke="#ffffff" stroke-width="1"/>
<path d="M57 631.500h56.500V607" fill="none" stroke="#e8e6d8" stroke-width="1"/>
<rect x="96" y="608" width="17" height="23" fill="#e0dfe3"/>
<path d="M96.500 631V608.500H113" fill="none" stroke="#fbfbf6" stroke-width="1"/>
<path d="M96 630.500h16.500V608" fill="none" stroke="#8a8a84" stroke-width="1"/>
<path d="M100.600 619.400h8.200l-4.100 4.200z" fill="#000"/>
<rect x="64.300" y="613.600" width="6.200" height="8.800" fill="#fce4e4" stroke="#101010" stroke-width="1"/>
<path d="M64.300 616h6.200M67.400 613.600v2.400" stroke="#101010" stroke-width=".8"/>
<path d="M66.600 617.800v7.600l1.800-1.600 1.700 3.400 1.100-.6-1.700-3.300 2.500-.3z" fill="#fff0a0" stroke="#202028" stroke-width=".8" stroke-linejoin="round"/>
<text x="56.1" y="285.3" font-family="Liberation Serif,serif" font-weight="bold" font-size="20" fill="#5c5c78">T</text>
</svg>
<!-- Score/Timeline window -->
<style>
#tl .fr{left:372px;top:736px;width:707px;height:218px;background:#fff;border-radius:6px 6px 0 0;border:1px solid #b4b4c6;border-bottom-color:#e4e4ee;border-right-color:#e4e4ee}
#tl .tb{left:373px;top:737px;width:705px;height:33px;border-radius:5px 5px 0 0;background:linear-gradient(#ffffff 0,#fdfdfe 2px,#dadae7 5px,#dedeea 10px,#ececf3 18px,#fdfdfe 26px,#ffffff 32px)}
#tl .bd{left:377px;top:769px;width:698px;height:181px;background:#e0dfe3;border:1px solid #c0c0d4;border-bottom:2px solid #d4d4e4}
#tl .pg{left:411px;top:770px;width:610px;height:173px;background:#e0dfe3;border-left:1px solid #fffff8;border-right:1px solid #716f64;border-bottom:1px solid #716f64;box-shadow:inset -1px -1px 0 #9d9da1,inset 1px 0 0 #f1efe2}
#tl .vt{left:381px;width:31px;background:#e0dfe3;border-left:1px solid #fffff8;border-bottom:1px solid #716f64;box-shadow:inset 0 -1px 0 #9d9da1;border-radius:0 0 0 3px}
#tl .ruler{left:631px;top:777px;width:400px;height:30px;background:linear-gradient(90deg,#fcdcb8 0,#fcdcb8 7px,#fff 7px,#fff 158px,#e6e6e6 158px);border-top:2px solid #6c6c68;border-left:2px solid #6c6c68;border-bottom:1px solid #fff}
#tl .list{left:431px;top:809px;width:574px;height:103px;background:#fff;border-top:2px solid #74746e;border-left:2px solid #74746e;overflow:hidden}
#tl .list .r{position:absolute;left:0;width:554px;height:20px}
#tl .list .r i{position:absolute;left:0;bottom:0;width:554px;height:1px;background:repeating-linear-gradient(90deg,#3c3c3c 0,#3c3c3c 1px,transparent 1px,transparent 2px)}
#tl .hsb{left:631px;top:917px;width:375px;height:20px;background:#efeff2}
</style>
<div id="tl">
<div class="a fr"></div><div class="a tb"></div><div class="a bd"></div>
<div class="t" style="left:400.11px;top:744.5px;font-size:20px;line-height:24px;transform:scaleX(1.0300);color:#8d8d8f">Score/Timeline</div>
<div class="a pg"></div>
<div class="a vt" style="top:770px;height:28px;left:379px;width:34px"></div>
<div class="a vt" style="top:799px;height:23px"></div>
<div class="a vt" style="top:823px;height:23px"></div>
<div class="a vt" style="top:847px;height:25px"></div>
<div class="a ruler"></div>
<div class="a list">
<div class="a" style="left:199px;top:0;width:7px;height:110px;background:#fcdcb8"></div>
<div class="a" style="left:207px;top:0;width:152px;height:110px;background:repeating-linear-gradient(90deg,transparent 0,transparent 7px,#d9d9d9 7px,#d9d9d9 8px)"></div>
<div class="a" style="left:0;top:20px;width:168px;height:19px;background:#ffcc8b"></div>
<div class="r" style="top:0px"><i></i></div>
<div class="r" style="top:20px"><i></i></div>
<div class="r" style="top:40px"><i></i></div>
<div class="r" style="top:60px"><i></i></div>
<div class="r" style="top:80px"><i></i></div>
</div>
<div class="a hsb"></div>
<div class="t" style="left:449.57px;top:811.75px;font-size:17px;line-height:20px;transform:scaleX(1.0474)">G1</div>
<div class="t" style="left:449.02px;top:831.5px;font-size:17px;line-height:20px;transform:scaleX(1.0662)">S17</div>
<div class="t" style="left:449.03px;top:851.5px;font-size:17px;line-height:20px;transform:scaleX(1.0569)">S16</div>
<div class="t" style="left:449.02px;top:871.5px;font-size:17px;line-height:20px;transform:scaleX(1.0662)">S17</div>
<div class="t" style="left:449.02px;top:891.5px;font-size:17px;line-height:20px;transform:scaleX(1.0662)">S17</div>
<div class="a" style="left:690px;top:779px;width:110px;height:13px;overflow:hidden"><div class="t" style="left:4.72px;top:2.3px;font-size:13.5px;line-height:16px;transform:scaleX(1.0055);-webkit-text-stroke:0">10</div><div class="t" style="left:84.75px;top:2.3px;font-size:13.5px;line-height:16px;transform:scaleX(1.0032);-webkit-text-stroke:0">20</div></div>
<svg class="a" style="left:373px;top:737px" width="706" height="216" viewBox="373 737 706 216">
<defs><pattern id="dith2" width="2" height="2" patternUnits="userSpaceOnUse"><rect width="2" height="2" fill="#e4e3e7"/><rect width="1" height="1" fill="#fbfbfc"/><rect x="1" y="1" width="1" height="1" fill="#fbfbfc"/></pattern></defs>
<rect x="380.5" y="749.5" width="14.5" height="11.5" fill="#fffffa" stroke="#7c9cd8" stroke-width="1"/><rect x="380" y="748.5" width="15.5" height="2.2" fill="#0c5cd8"/><rect x="380" y="760.3" width="15.5" height="1" fill="#2c50b0"/>
<path d="M639.5 792.7V797M647.5 792.7V797M655.5 792.7V797M663.5 792.7V800M671.5 792.7V797M679.5 792.7V797M687.5 792.7V797M695.5 792.7V797M703.5 792.7V800M711.5 792.7V797M719.5 792.7V797M727.5 792.7V797M735.5 792.7V797M743.5 792.7V800M751.5 792.7V797M759.5 792.7V797M767.5 792.7V797M775.5 792.7V797M783.5 792.7V800M791.5 792.7V797M799.5 792.7V797M807.5 792.7V797M815.5 792.7V797" stroke="#101010" stroke-width="1.2"/>
<g fill="#ffffff" stroke="#585858" stroke-width="1.1"><circle cx="723.5" cy="820.6" r="2.4"/><circle cx="731.5" cy="820.6" r="2.4"/><circle cx="739.5" cy="820.6" r="2.4"/><circle cx="747.5" cy="820.6" r="2.4"/><circle cx="755.5" cy="820.6" r="2.4"/><circle cx="763.5" cy="820.6" r="2.4"/><circle cx="771.5" cy="820.6" r="2.4"/><circle cx="643.5" cy="840.6" r="2.4"/><circle cx="651.5" cy="840.6" r="2.4"/><circle cx="659.5" cy="840.6" r="2.4"/><circle cx="667.5" cy="840.6" r="2.4"/><circle cx="675.5" cy="840.6" r="2.4"/><circle cx="683.5" cy="840.6" r="2.4"/><circle cx="691.5" cy="840.6" r="2.4"/><circle cx="699.5" cy="840.6" r="2.4"/><circle cx="707.5" cy="840.6" r="2.4"/><circle cx="715.5" cy="840.6" r="2.4"/><circle cx="723.5" cy="840.6" r="2.4"/><circle cx="731.5" cy="840.6" r="2.4"/><circle cx="739.5" cy="840.6" r="2.4"/><circle cx="747.5" cy="840.6" r="2.4"/><circle cx="755.5" cy="840.6" r="2.4"/><circle cx="763.5" cy="840.6" r="2.4"/><circle cx="771.5" cy="840.6" r="2.4"/><circle cx="779.5" cy="840.6" r="2.4"/><circle cx="787.5" cy="840.6" r="2.4"/><circle cx="635.5" cy="860.6" r="2.4"/><circle cx="643.5" cy="860.6" r="2.4"/><circle cx="651.5" cy="860.6" r="2.4"/><circle cx="659.5" cy="860.6" r="2.4"/><circle cx="667.5" cy="860.6" r="2.4"/><circle cx="675.5" cy="860.6" r="2.4"/><circle cx="683.5" cy="860.6" r="2.4"/><circle cx="691.5" cy="860.6" r="2.4"/><circle cx="699.5" cy="860.6" r="2.4"/><circle cx="707.5" cy="860.6" r="2.4"/><circle cx="715.5" cy="860.6" r="2.4"/><circle cx="723.5" cy="860.6" r="2.4"/><circle cx="731.5" cy="860.6" r="2.4"/><circle cx="739.5" cy="860.6" r="2.4"/><circle cx="747.5" cy="860.6" r="2.4"/><circle cx="755.5" cy="860.6" r="2.4"/><circle cx="763.5" cy="860.6" r="2.4"/><circle cx="771.5" cy="860.6" r="2.4"/><circle cx="779.5" cy="860.6" r="2.4"/><circle cx="787.5" cy="860.6" r="2.4"/><circle cx="635.5" cy="880.6" r="2.4"/><circle cx="643.5" cy="880.6" r="2.4"/><circle cx="651.5" cy="880.6" r="2.4"/><circle cx="659.5" cy="880.6" r="2.4"/><circle cx="667.5" cy="880.6" r="2.4"/><circle cx="675.5" cy="880.6" r="2.4"/><circle cx="683.5" cy="880.6" r="2.4"/><circle cx="691.5" cy="880.6" r="2.4"/><circle cx="699.5" cy="880.6" r="2.4"/><circle cx="707.5" cy="880.6" r="2.4"/><circle cx="715.5" cy="880.6" r="2.4"/><circle cx="723.5" cy="880.6" r="2.4"/><circle cx="731.5" cy="880.6" r="2.4"/><circle cx="739.5" cy="880.6" r="2.4"/><circle cx="747.5" cy="880.6" r="2.4"/><circle cx="755.5" cy="880.6" r="2.4"/><circle cx="763.5" cy="880.6" r="2.4"/><circle cx="771.5" cy="880.6" r="2.4"/><circle cx="779.5" cy="880.6" r="2.4"/><circle cx="787.5" cy="880.6" r="2.4"/><circle cx="635.5" cy="900.6" r="2.4"/><circle cx="643.5" cy="900.6" r="2.4"/><circle cx="651.5" cy="900.6" r="2.4"/><circle cx="659.5" cy="900.6" r="2.4"/><circle cx="667.5" cy="900.6" r="2.4"/><circle cx="675.5" cy="900.6" r="2.4"/><circle cx="683.5" cy="900.6" r="2.4"/><circle cx="691.5" cy="900.6" r="2.4"/><circle cx="699.5" cy="900.6" r="2.4"/><circle cx="707.5" cy="900.6" r="2.4"/><circle cx="715.5" cy="900.6" r="2.4"/><circle cx="723.5" cy="900.6" r="2.4"/><circle cx="731.5" cy="900.6" r="2.4"/><circle cx="739.5" cy="900.6" r="2.4"/><circle cx="747.5" cy="900.6" r="2.4"/><circle cx="755.5" cy="900.6" r="2.4"/><circle cx="763.5" cy="900.6" r="2.4"/><circle cx="771.5" cy="900.6" r="2.4"/><circle cx="779.5" cy="900.6" r="2.4"/><circle cx="787.5" cy="900.6" r="2.4"/></g>
<rect x="633" y="838.1" width="5" height="5" rx="1.2" fill="#3ca4fc" stroke="#3c5c80" stroke-width=".9"/>
<rect x="437.5" y="817" width="8.5" height="8" fill="#fff" stroke="#84848c" stroke-width="1"/><path d="M439.4 821h4.700M441.750 818.700v4.700" stroke="#000" stroke-width="1"/>
<rect x="987" y="811" width="18" height="101" fill="#f4f4fa"/>
<rect x="987.5" y="826" width="16" height="17" rx="1.500" fill="url(#gSbB)" stroke="#a4a4c0" stroke-width="1"/>
<rect x="987.5" y="894.5" width="16" height="17" rx="1.500" fill="url(#gSbB)" stroke="#a4a4c0" stroke-width="1"/>
<path d="M991.300 900.800l4.200 4 4.200-4" fill="none" stroke="#38383c" stroke-width="2"/>
<rect x="631" y="917" width="375" height="20" fill="url(#dith2)"/>
<rect x="631" y="917" width="17" height="20" fill="#e0dfe3"/><path d="M631.5 937V917.500H648" fill="none" stroke="#fffffa" stroke-width="1"/><path d="M631 936.500H647.5V917" fill="none" stroke="#74746c" stroke-width="1.200"/>
<rect x="648" y="917" width="19" height="20" fill="#e0dfe3"/><path d="M648.5 937V917.500H667" fill="none" stroke="#fffffa" stroke-width="1"/><path d="M648 936.500H666.5V917" fill="none" stroke="#74746c" stroke-width="1.200"/>
<rect x="989" y="917" width="17" height="20" fill="#e0dfe3"/><path d="M989.5 937V917.500H1006" fill="none" stroke="#fffffa" stroke-width="1"/><path d="M989 936.500H1005.5V917" fill="none" stroke="#74746c" stroke-width="1.200"/>
<path d="M641.500 922.800v8.400l-4.200-4.200z" fill="#000"/><path d="M995.500 922.800v8.400l4.200-4.200z" fill="#000"/>
<path d="M470 787.500h3.500v-1.500q1.500-1.600 3 0v2.500h-2v3h2.500v4.500h-5.500v-4h-1.500z" fill="#fffaf0" stroke="#101010" stroke-width="1" stroke-linejoin="round"/>
<path d="M476.500 791h4" stroke="#5c5488" stroke-width="1.800"/><path d="M479.800 786.800l4.400 4.200-4.400 4.200z" fill="#5c5488"/>
<path d="M512.500 791h7" stroke="#5c5488" stroke-width="1.800"/><path d="M513.600 786.800l-4.600 4.200 4.600 4.200zM518.400 786.800l4.600 4.200-4.600 4.200z" fill="#5c5488"/>
<path d="M548.200 791h7M551.700 787.400v7.200" stroke="#5c5488" stroke-width="1.800"/>
<rect x="557.200" y="785.500" width="6.400" height="13" fill="#fff4e0" stroke="#000" stroke-width="1.300"/><path d="M557.200 788.800h6.400M557.200 795.200h6.400M560.400 785.500v3.300M560.400 795.200v3.300" stroke="#000" stroke-width="1.100"/>
<path d="M589.500 785.500q0-1 1-1h12v14h-12q-1 0-1-1z" fill="url(#gBook)" stroke="#3c50a0" stroke-width=".8"/><path d="M590.500 785h11.800v1.100h-11.800z" fill="#dfe6f8"/>
<text x="592.400" y="796.600" font-family="Liberation Sans,sans-serif" font-weight="bold" font-size="11.500" fill="#ffffff">?</text>
<circle cx="394.400" cy="783.500" r="6.700" fill="#fffff4" stroke="#a8a040" stroke-width="1.600"/><path d="M397 780v4.500h-5.500" fill="none" stroke="#000" stroke-width="1.300"/><path d="M395.300 781.300l1.700-2 1.700 2zM393 782.600l-2.200 1.900 2.200 1.900z" fill="#000"/>
<path d="M391.600 814.200l9.600-8.800" stroke="#181818" stroke-width="2"/><path d="M399.400 807l1.800-1.700" stroke="#e8d020" stroke-width="2.200"/><g fill="#d02020"><rect x="392.600" y="801.600" width="1.300" height="1.300"/><rect x="396.400" y="802.600" width="1.300" height="1.300"/><rect x="392" y="806.800" width="1.300" height="1.300"/><rect x="394.800" y="805" width="1.300" height="1.300"/><rect x="398.200" y="800.800" width="1.300" height="1.300"/></g>
<path d="M390.500 827h7l2 2v6.500h-9.500z" fill="#e8ecf8" stroke="#7c8cb0" stroke-width=".9"/><rect x="393.500" y="831.500" width="8.500" height="8.500" rx="1" fill="#b4c8ec" stroke="#6c84b8" stroke-width=".9"/><path d="M396.300 837.500v-4h3.200v3.400" fill="none" stroke="#2c4480" stroke-width=".9"/>
<rect x="388.500" y="851.500" width="14" height="14" fill="#fff" stroke="#303030" stroke-width="1"/><path d="M395.500 851.500v14M388.500 858.500h14" stroke="#303030" stroke-width="1"/><g fill="#f0a040" stroke="#602000" stroke-width=".7"><circle cx="391.500" cy="854.800" r="1.400"/><circle cx="399" cy="854.800" r="1.400"/><circle cx="392.500" cy="862" r="1.400"/><circle cx="400" cy="862" r="1.400"/></g>
<path d="M1060 948l14-14M1064 948l10-10M1068 948l6-6" stroke="#b4b4bc" stroke-width="1"/><path d="M1061 948l13-13M1065 948l9-9M1069 948l5-5" stroke="#ffffff" stroke-width="1"/>
</svg>
</div>
<!-- Shape S17 property window -->
<style>
#shp .fr{left:817px;top:182px;width:414px;height:659px;background:#fff;border-radius:6px 6px 0 0;border:1px solid #8686a8;border-bottom-color:#a8a8c4}
#shp .tb{left:818px;top:183px;width:412px;height:33px;border-radius:5px 5px 0 0;background:linear-gradient(#ffffff 0,#ffffff 2.5px,#c0c0d4 4.5px,#b2b2ca 8px,#b8b8ce 13px,#d0d0e0 19px,#f0f0f6 25px,#ffffff 29px,#ffffff 33px)}
#shp .bd{left:822px;top:215px;width:404.5px;height:623px;background:#e0dfe3;border:1px solid #7a7aa4;border-top-color:#9494b8;border-bottom:3px solid #a2a2be}
#shp .tab{height:28px;top:273px;background:#e0dfe3;border-top:1px solid #fffff8;border-left:1px solid #fffff8;border-right:1px solid #716f64;box-shadow:inset -1px 0 0 #9d9da1,inset 1px 1px 0 #f1efe2;border-radius:3px 3px 0 0}
#shp .body{left:833px;top:300px;width:382px;height:424px;background:#e0dfe3;border-top:1px solid #fffff8;border-left:1px solid #fffff8;border-right:1px solid #716f64;border-bottom:1px solid #716f64;box-shadow:inset -1px -1px 0 #9d9da1,inset 1px 1px 0 #f1efe2}
#grid{left:840px;top:312px;width:366px;height:396px;background:#fff;border:1px solid #000;border-top:2px solid #101010;border-left:2px solid #404040;overflow:hidden}
#grid .r{position:absolute;left:1px;width:342px;height:19px;background:linear-gradient(90deg,#f5f1f0 0,#f5f1f0 194px,#fff 194px)}
#grid .r.s{background:linear-gradient(90deg,#ffcc8b 0,#ffcc8b 194px,#fff 194px)}
#grid .r i{position:absolute;left:0;bottom:0;width:342px;height:1px;background:repeating-linear-gradient(90deg,#3c3c3c 0,#3c3c3c 1px,transparent 1px,transparent 2px)}
#gtx{left:0;top:0;width:1186px;height:706px;overflow:hidden}
#gtx .d{color:#a9a9a9}
#desc{left:835px;top:735px;width:378px;height:81px;border-top:1px solid #9c9ca0;border-left:1px solid #9c9ca0;border-right:1px solid #fff;border-bottom:1px solid #fff}
</style>
<div id="shp">
<div class="a fr"></div><div class="a tb"></div><div class="a bd"></div>
<div class="t" style="left:845.1px;top:190.9px;font-size:20px;line-height:24px;transform:scaleX(1.0364);text-shadow:1px 1px 1px #b0b0c0">Shape S17</div>
<div class="a tab" style="left:833px;top:271px;width:49px;height:31px;z-index:2"></div>
<div class="a tab" style="left:882px;width:49px"></div>
<div class="a tab" style="left:931px;width:67px"></div>
<div class="a tab" style="left:998px;width:83px"></div>
<div class="a body"></div>
<div class="a" style="left:834px;top:300px;width:46px;height:2px;background:#e0dfe3;z-index:3"></div>
<div class="t" style="left:841px;top:276.9px;font-size:17px;line-height:19px;transform:scaleX(1.0635);font-family:'Liberation Sans',sans-serif;z-index:4;-webkit-text-stroke:.5px">All</div>
<div class="t" style="left:885.5px;top:278.8px;font-size:17px;line-height:19px;transform:scaleX(1.0572);font-family:'Liberation Sans',sans-serif;-webkit-text-stroke:.5px">Look</div>
<div class="t" style="left:937.1px;top:278.8px;font-size:17px;line-height:19px;transform:scaleX(1.0543);font-family:'Liberation Sans',sans-serif;-webkit-text-stroke:.5px">Effects</div>
<div class="t" style="left:1003.74px;top:278.8px;font-size:17px;line-height:19px;transform:scaleX(1.0634);font-family:'Liberation Sans',sans-serif;-webkit-text-stroke:.5px">Behavior</div>
<div class="a" id="grid">
<div class="r h" style="top:1px"><i></i></div>
<div class="r" style="top:20px"><i></i></div>
<div class="r" style="top:39px"><i></i></div>
<div class="r s" style="top:58px"><i></i></div>
<div class="r" style="top:77px"><i></i></div>
<div class="r d" style="top:96px"><i></i></div>
<div class="r d" style="top:115px"><i></i></div>
<div class="r h" style="top:134px"><i></i></div>
<div class="r" style="top:153px"><i></i></div>
<div class="r" style="top:172px"><i></i></div>
<div class="r" style="top:191px"><i></i></div>
<div class="r" style="top:210px"><i></i></div>
<div class="r" style="top:229px"><i></i></div>
<div class="r h" style="top:248px"><i></i></div>
<div class="r" style="top:267px"><i></i></div>
<div class="r" style="top:286px"><i></i></div>
<div class="r" style="top:305px"><i></i></div>
<div class="r d" style="top:324px"><i></i></div>
<div class="r" style="top:343px"><i></i></div>
<div class="r" style="top:362px"><i></i></div>
<div class="r" style="top:381px"><i></i></div>
</div>
<div class="a" id="gtx">
<div class="t" style="left:846.56px;top:315.7px;font-size:16.6px;line-height:19px;transform:scaleX(1.0310);font-weight:700">Look</div>
<div class="t" style="left:858.09px;top:334.7px;font-size:16.6px;line-height:19px;transform:scaleX(1.0962)">Position/size</div>
<div class="t" style="left:1039.56px;top:334.7px;font-size:16.6px;line-height:19px;transform:scaleX(1.1072)">(229.5, 259.5)</div>
<div class="t" style="left:858.06px;top:353.7px;font-size:16.6px;line-height:19px;transform:scaleX(1.1149)">Is filled</div>
<div class="t" style="left:1041.38px;top:353.7px;font-size:16.6px;line-height:19px;transform:scaleX(1.0281)">yes</div>
<div class="t" style="left:858.28px;top:372.7px;font-size:16.6px;line-height:19px;transform:scaleX(1.1208)">Color/fill</div>
<div class="t" style="left:1039.55px;top:372.7px;font-size:16.6px;line-height:19px;transform:scaleX(1.0869)">gradient</div>
<div class="t" style="left:858.14px;top:391.7px;font-size:16.6px;line-height:19px;transform:scaleX(1.0653)">Line width</div>
<div class="t" style="left:1040.36px;top:391.7px;font-size:16.6px;line-height:19px;transform:scaleX(1.0047)">0</div>
<div class="t d" style="left:858.13px;top:410.7px;font-size:16.6px;line-height:19px;transform:scaleX(1.0735)">Line color</div>
<div class="t d" style="left:858.09px;top:429.7px;font-size:16.6px;line-height:19px;transform:scaleX(1.0970)">Is closed</div>
<div class="t" style="left:846.74px;top:448.7px;font-size:16.6px;line-height:19px;transform:scaleX(1.0903);font-weight:700">Effects</div>
<div class="t" style="left:858.14px;top:467.7px;font-size:16.6px;line-height:19px;transform:scaleX(1.0692)">Motion script</div>
<div class="t" style="left:1039.6px;top:467.7px;font-size:16.6px;line-height:19px;transform:scaleX(1.0831)">none</div>
<div class="t" style="left:858.03px;top:486.7px;font-size:16.6px;line-height:19px;transform:scaleX(1.0767)">3D</div>
<div class="t" style="left:1039.6px;top:486.7px;font-size:16.6px;line-height:19px;transform:scaleX(1.0831)">none</div>
<div class="t" style="left:858.07px;top:505.7px;font-size:16.6px;line-height:19px;transform:scaleX(1.1131)">Fade/size</div>
<div class="t" style="left:1039.6px;top:505.7px;font-size:16.6px;line-height:19px;transform:scaleX(1.0831)">none</div>
<div class="t" style="left:857.99px;top:524.7px;font-size:16.6px;line-height:19px;transform:scaleX(1.1151)">Spin/rotate</div>
<div class="t" style="left:1039.6px;top:524.7px;font-size:16.6px;line-height:19px;transform:scaleX(1.0831)">none</div>
<div class="t" style="left:858.12px;top:543.7px;font-size:16.6px;line-height:19px;transform:scaleX(1.0801)">Drop shadow</div>
<div class="t" style="left:1039.6px;top:543.7px;font-size:16.6px;line-height:19px;transform:scaleX(1.0831)">none</div>
<div class="t" style="left:846.76px;top:562.7px;font-size:16.6px;line-height:19px;transform:scaleX(1.0733);font-weight:700">Behavior</div>
<div class="t" style="left:858.09px;top:581.7px;font-size:16.6px;line-height:19px;transform:scaleX(1.0964)">Is a button</div>
<div class="t" style="left:1039.59px;top:581.7px;font-size:16.6px;line-height:19px;transform:scaleX(1.0910)">no</div>
<div class="t" style="left:858.06px;top:600.7px;font-size:16.6px;line-height:19px;transform:scaleX(1.1156)">Is a symbol</div>
<div class="t" style="left:1039.59px;top:600.7px;font-size:16.6px;line-height:19px;transform:scaleX(1.0910)">no</div>
<div class="t" style="left:858.05px;top:619.7px;font-size:16.6px;line-height:19px;transform:scaleX(1.1268)">Is a mask</div>
<div class="t" style="left:1039.59px;top:619.7px;font-size:16.6px;line-height:19px;transform:scaleX(1.0910)">no</div>
<div class="t d" style="left:858.5px;top:638.7px;font-size:16.6px;line-height:19px;transform:scaleX(1.0593)">Masking depth</div>
<div class="t" style="left:858.45px;top:657.7px;font-size:16.6px;line-height:19px;transform:scaleX(1.0922)">Ease in/out</div>
<div class="t" style="left:1039.31px;top:657.7px;font-size:16.6px;line-height:19px;transform:scaleX(1.0840)">linear tweening</div>
<div class="t" style="left:858.5px;top:676.7px;font-size:16.6px;line-height:19px;transform:scaleX(1.0575)">Motion path</div>
<div class="t" style="left:1039.6px;top:676.7px;font-size:16.6px;line-height:19px;transform:scaleX(1.0831)">none</div>
<div class="t" style="left:858.5px;top:695.7px;font-size:16.6px;line-height:19px;transform:scaleX(1.0598)">Morphing hints</div>
<div class="t" style="left:1039.6px;top:695.7px;font-size:16.6px;line-height:19px;transform:scaleX(1.0831)">none</div>
</div>
<div class="a" id="desc"></div>
<div class="t" style="left:838.6px;top:737.6px;font-size:19.6px;line-height:22px;transform:scaleX(0.9787);font-family:'Liberation Sans',sans-serif;-webkit-text-stroke:.45px">Fill details, e.g. color, gradient, or bitmap.</div>
<svg class="a" style="left:818px;top:183px" width="412" height="658" viewBox="818 183 412 658">
<defs>
<linearGradient id="gSb" x1="0" y1="0" x2="1" y2="0"><stop offset="0" stop-color="#f4f4fa"/><stop offset=".5" stop-color="#e2e2ee"/><stop offset="1" stop-color="#bcbcd6"/></linearGradient>
<linearGradient id="gSbB" x1="0" y1="0" x2="0" y2="1"><stop offset="0" stop-color="#fafafd"/><stop offset="1" stop-color="#c4c4da"/></linearGradient>
<linearGradient id="gClose" x1="0" y1="0" x2="0" y2="1"><stop offset="0" stop-color="#e4737a"/><stop offset="1" stop-color="#c8444e"/></linearGradient>
</defs>
<!-- window icon -->
<rect x="825.5" y="195.5" width="14.5" height="11.5" fill="#fffffa" stroke="#7c9cd8" stroke-width="1"/>
<rect x="825" y="194.5" width="15.5" height="2.2" fill="#0c5cd8"/>
<rect x="825" y="206.3" width="15.5" height="1" fill="#2c50b0"/>
<!-- close -->
<rect x="1200.5" y="190.5" width="22" height="22" rx="3" fill="url(#gClose)" stroke="#b84850" stroke-width="1"/>
<path d="M1205.5 195.500l12 12M1217.5 195.500l-12 12" stroke="#ffffff" stroke-width="3.2" stroke-linecap="square"/>
<!-- help -->
<path d="M849.6 232q0-1 1-1h11.600v13.200h-11.600q-1 0-1-1z" fill="url(#gBook)" stroke="#3c50a0" stroke-width=".8"/>
<path d="M850.6 231.600h11.400v1h-11.400z" fill="#dfe6f8"/>
<!-- up button -->
<rect x="1192" y="225" width="24" height="19" fill="#e0dfe3"/>
<path d="M1192.5 244V225.500H1216" fill="none" stroke="#ffffff" stroke-width="1"/>
<path d="M1192 243h23V225" fill="none" stroke="#84847c" stroke-width="2"/>
<path d="M1199.6 237h8.800l-4.400-4.400z" fill="#202020"/>
<!-- scrollbar -->
<rect x="1186" y="315" width="18" height="391" fill="#f3f3f8"/>
<rect x="1187.5" y="333.500" width="15" height="336" rx="1.5" fill="url(#gSb)" stroke="#a4a4c0" stroke-width="1"/>
<rect x="1187.5" y="316.500" width="15" height="16" rx="1.5" fill="url(#gSbB)" stroke="#a4a4c0" stroke-width="1"/>
<rect x="1187.5" y="687.500" width="15" height="17" rx="1.5" fill="url(#gSbB)" stroke="#a4a4c0" stroke-width="1"/>
<path d="M1190.8 326l4.200-4 4.200 4" fill="none" stroke="#38383c" stroke-width="2"/>
<path d="M1190.8 693.500l4.200 4 4.200-4" fill="none" stroke="#38383c" stroke-width="2"/>
<path d="M1192 499h6M1192 501h6M1192 503h6" stroke="#9c9cb4" stroke-width=".8"/>
<!-- ellipsis button -->
<rect x="1169" y="371" width="16" height="19" fill="#e0dfe3"/>
<path d="M1169 390h16V371" fill="none" stroke="#101010" stroke-width="1.2"/>
<g fill="#202020"><rect x="1172.6" y="385" width="1.2" height="1.4"/><rect x="1175.8" y="385" width="1.2" height="1.4"/><rect x="1179" y="385" width="1.2" height="1.4"/></g>
<!-- grip -->
<path d="M1212 836l14-14M1216 836l10-10M1220 836l6-6" stroke="#b4b4bc" stroke-width="1"/>
<path d="M1213 836l13-13M1217 836l9-9M1221 836l5-5" stroke="#ffffff" stroke-width="1"/>
<text x="852.6" y="242.4" font-family="Liberation Sans,sans-serif" font-weight="bold" font-size="10.5" fill="#ffffff">?</text>
</svg>
</div>
<!-- bottom bar -->
<div class="a" style="left:0;top:964px;width:1280px;height:60px;background:#e0dfe5;border-top:2px solid #fdfdfd"></div>
<div class="a" style="left:1278px;top:97px;width:2px;height:869px;background:#fbfbf8"></div>
<div class="a" style="left:0;top:1001px;width:1280px;height:2px;background:linear-gradient(#9c9ca0 0,#9c9ca0 1px,#fbfbfc 1px)"></div>
<style>
.fld{position:absolute;top:970px;height:27px;background:#e7dcdc;border-top:1px solid #9d9da1;border-left:1px solid #9d9da1;border-right:1px solid #fff;border-bottom:1px solid #fff}
.btn{position:absolute;top:970px;height:27px;background:#e0dfe3;border-top:1px solid #fffffc;border-left:1px solid #fffffc;border-right:1px solid #716f64;border-bottom:1px solid #716f64;box-shadow:inset -1px -1px 0 #9d9da1,inset 1px 1px 0 #f1efe2}
.btn.dn{border-right:2px solid #181818;border-bottom:2px solid #181818;border-top-color:#e0dfe3;border-left-color:#e0dfe3;box-shadow:none}
</style>
<div class="fld" style="left:17px;width:130px"></div>
<div class="fld" style="left:147px;width:90px"></div>
<div class="fld" style="left:252px;width:606px;border-right:0;border-bottom:1px solid #9c9c9c"></div>
<div class="btn dn" style="left:252px;width:13px"></div>
<div class="btn" style="left:265px;width:17px"></div>
<div class="btn" style="left:282px;width:28px"></div>
<div class="btn" style="left:827px;width:18px"></div>
<div class="btn dn" style="left:845px;width:13px"></div>
<div class="btn" style="left:873px;width:35px"></div>
<div class="btn" style="left:923px;width:35px"></div>
<div class="btn" style="left:958px;width:35px"></div>
<div class="fld" style="left:1008px;width:100px"></div>
<div class="btn" style="left:1108px;width:23px"></div>
<div class="fld" style="left:1146px;width:95px"></div>
<div class="btn" style="left:1240px;width:24px"></div>
<div class="t" style="left:22.75px;top:976.5px;font-size:13.3px;line-height:15px;letter-spacing:1.357px">Key frame 1</div>
<div class="t" style="left:153.47px;top:976.5px;font-size:13.3px;line-height:15px;letter-spacing:1.198px">0.0 sec</div>
<div class="t" style="left:1014.27px;top:976.5px;font-size:13.3px;line-height:15px;letter-spacing:1.387px">3 tweens</div>
<div class="t" style="left:1152.37px;top:976.5px;font-size:13.3px;line-height:15px;letter-spacing:1.080px">Scene 1</div>
<div id="status"><div class="t" style="left:11.73px;top:1007.6px;font-size:13.3px;line-height:15px;letter-spacing:0.772px;transform:scaleX(1.1000);-webkit-text-stroke:.5px">Mouse: (244, 265)</div>  <div class="t" style="left:168.99px;top:1007.6px;font-size:13.3px;line-height:15px;letter-spacing:0.626px;transform:scaleX(1.1000);-webkit-text-stroke:.5px">Selection: (229.5, 259.5) x (277.5, 277.0)</div>  <div class="t" style="left:512.34px;top:1007.6px;font-size:13.3px;line-height:15px;letter-spacing:0.338px;transform:scaleX(1.1000);-webkit-text-stroke:.5px">W=48.0,</div>  <div class="t" style="left:588.43px;top:1007.6px;font-size:13.3px;line-height:15px;letter-spacing:0.621px;transform:scaleX(1.1000);-webkit-text-stroke:.5px">H=17.5</div></div>
<svg class="a" style="left:0;top:966px" width="1280" height="36" viewBox="0 966 1280 36">
<defs>
<linearGradient id="gPlay" x1="0" y1="0" x2="1" y2="1"><stop offset="0" stop-color="#ffe9a0"/><stop offset="1" stop-color="#e89c20"/></linearGradient>
<linearGradient id="gPlus" x1="0" y1="0" x2="0" y2="1"><stop offset="0" stop-color="#b4e02c"/><stop offset="1" stop-color="#6cb010"/></linearGradient>
<linearGradient id="gMinus" x1="0" y1="0" x2="0" y2="1"><stop offset="0" stop-color="#e8a0a4"/><stop offset="1" stop-color="#c04c54"/></linearGradient>
</defs>
<path d="M260.400 976.600v6M260.400 979.600l-3.400-3v6z" fill="#9c9ca0" stroke="#9c9ca0" stroke-width="1"/>
<path d="M275.600 979.800v6.800l-4-3.400z" fill="#a4a4a8"/>
<path d="M835 979.400v7l4.200-3.500z" fill="#000"/>
<path d="M849.400 978v5l3.200-2.500z" fill="#000"/><path d="M853.600 978v5" stroke="#000" stroke-width="1.200"/>
<path d="M886.400 975.800v14.400l8.800-7.200z" fill="url(#gPlay)" stroke="#a46c1c" stroke-width="1.100" stroke-linejoin="round"/>
<path d="M937.600 976.400h4.800v4.400h4.400v4.800h-4.400v4.400h-4.800v-4.400h-4.400v-4.800h4.400z" fill="url(#gPlus)" stroke="#74a428" stroke-width=".8" stroke-linejoin="round"/>
<rect x="968.200" y="980.800" width="14" height="4.600" rx="1" fill="url(#gMinus)" stroke="#b05058" stroke-width=".8"/>
<circle cx="1118.800" cy="982.500" r="6.800" fill="#f6f2f0" stroke="#4c4c4c" stroke-width="1.400"/>
<path d="M1119 977.600v5.200h-4.400" fill="none" stroke="#505050" stroke-width="1.100"/>
<path d="M1245.600 980.600l9.800-3.800.8 2-9.800 3.800z" fill="#e8e8d8" stroke="#505040" stroke-width=".9"/>
<rect x="1246" y="983" width="11" height="7.600" fill="#f4f4f0" stroke="#505050" stroke-width=".9"/>
<path d="M1246 985.600h11M1246 988h11" stroke="#606060" stroke-width=".8"/>
</svg>
</body>
</html>
